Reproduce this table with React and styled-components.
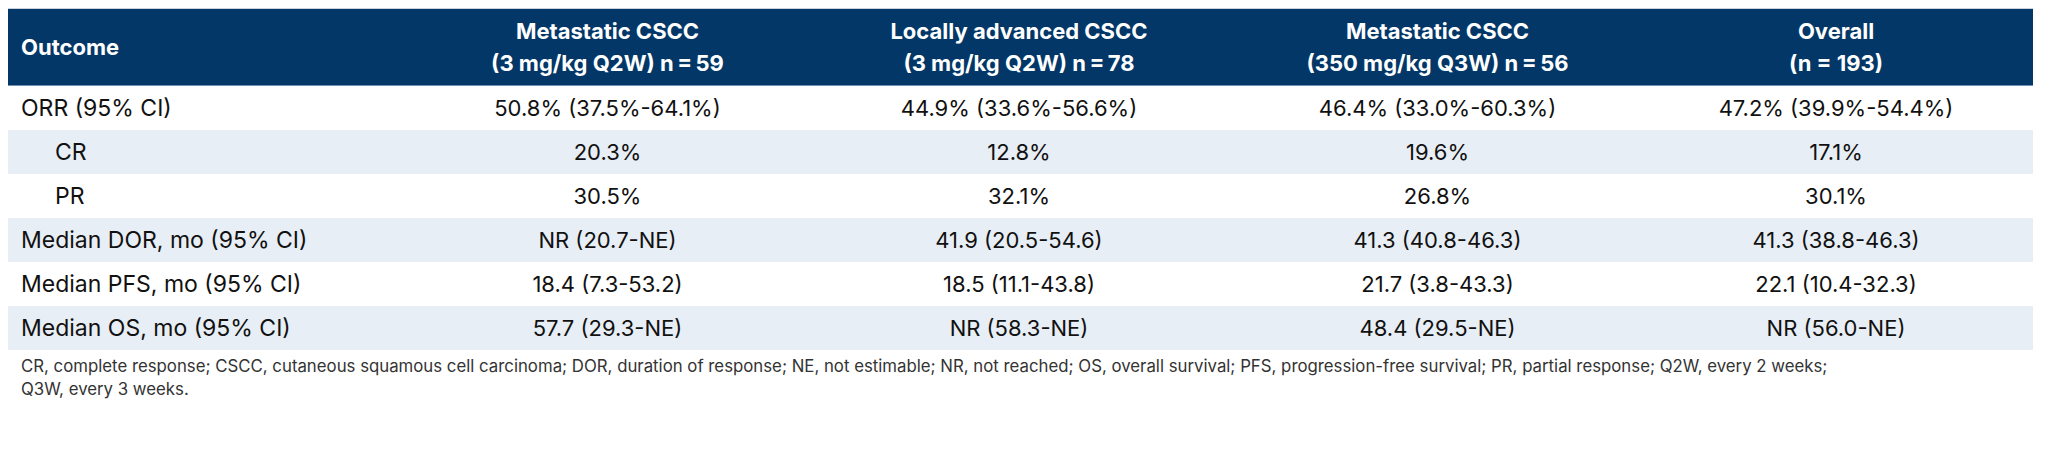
import React from 'react';
import styled, { createGlobalStyle } from 'styled-components';

const GlobalStyle = createGlobalStyle`
  body {
    margin: 8px;
    background: #ffffff;
    font-family: Inter, Roboto, "Liberation Sans", Arial, sans-serif;
    color: #111111;
  }
`;

const columns = [
  { title: 'Outcome', width: 405 },
  { title: 'Metastatic CSCC', sub: '(3 mg/kg Q2W) n\u2009=\u200959', width: 389 },
  { title: 'Locally advanced CSCC', sub: '(3 mg/kg Q2W) n\u2009=\u200978', width: 434 },
  { title: 'Metastatic CSCC', sub: '(350 mg/kg Q3W) n\u2009=\u200956', width: 403 },
  { title: 'Overall', sub: '(n = 193)', width: 394 }
];

const rows = [
  { label: 'ORR (95% CI)', values: ['50.8% (37.5%-64.1%)', '44.9% (33.6%-56.6%)', '46.4% (33.0%-60.3%)', '47.2% (39.9%-54.4%)'] },
  { label: 'CR', sub: true, values: ['20.3%', '12.8%', '19.6%', '17.1%'] },
  { label: 'PR', sub: true, values: ['30.5%', '32.1%', '26.8%', '30.1%'] },
  { label: 'Median DOR, mo (95% CI)', values: ['NR (20.7-NE)', '41.9 (20.5-54.6)', '41.3 (40.8-46.3)', '41.3 (38.8-46.3)'] },
  { label: 'Median PFS, mo (95% CI)', values: ['18.4 (7.3-53.2)', '18.5 (11.1-43.8)', '21.7 (3.8-43.3)', '22.1 (10.4-32.3)'] },
  { label: 'Median OS, mo (95% CI)', values: ['57.7 (29.3-NE)', 'NR (58.3-NE)', '48.4 (29.5-NE)', 'NR (56.0-NE)'] }
];

const App = () => {
  return (
    <Page>
      <GlobalStyle />
      <Table>
        <colgroup>
          {columns.map((c, i) => (
            <col key={i} style={{ width: c.width }} />
          ))}
        </colgroup>
        <thead>
          <HeadRow>
            {columns.map((c, i) => (
              <HeadCell key={i} $first={i === 0}>
                {c.title}
                {c.sub && <br />}
                {c.sub}
              </HeadCell>
            ))}
          </HeadRow>
        </thead>
        <tbody>
          {rows.map((r, i) => (
            <BodyRow key={i} $shaded={i % 2 === 1}>
              <LabelCell $sub={r.sub}>{r.label}</LabelCell>
              {r.values.map((v, j) => (
                <ValueCell key={j}>{v}</ValueCell>
              ))}
            </BodyRow>
          ))}
        </tbody>
      </Table>
      <Footnote>
        CR, complete response; CSCC, cutaneous squamous cell carcinoma; DOR, duration of response; NE, not estimable; NR, not reached; OS, overall survival; PFS, progression-free survival; PR, partial response; Q2W, every 2 weeks; Q3W, every 3 weeks.
      </Footnote>
    </Page>
  );
};

export default App;

const Page = styled.div`
  width: 2025px;
`;

const Table = styled.table`
  width: 2025px;
  table-layout: fixed;
  border-collapse: collapse;
  border-top: 1px solid #c9d3de;
`;

const HeadRow = styled.tr`
  background: #023767;
  height: 77px;
  border-bottom: 1px solid #6f8fb3;
`;

const HeadCell = styled.th`
  color: #ffffff;
  font-weight: 700;
  font-size: 22px;
  line-height: 32px;
  text-align: ${(p) => (p.$first ? 'left' : 'center')};
  padding: 4px 13px;
  vertical-align: middle;
`;

const BodyRow = styled.tr`
  height: 44px;
  background: ${(p) => (p.$shaded ? '#e8eef5' : '#ffffff')};
`;

const LabelCell = styled.td`
  font-size: 23px;
  padding: 0 13px 0 ${(p) => (p.$sub ? '47px' : '13px')};
  white-space: nowrap;
`;

const ValueCell = styled.td`
  font-size: 22px;
  text-align: center;
  padding: 0 8px;
  white-space: nowrap;
`;

const Footnote = styled.p`
  margin: 0;
  padding: 5px 13px 0;
  max-width: 1830px;
  font-size: 16.8px;
  line-height: 23px;
  color: #333333;
`;
